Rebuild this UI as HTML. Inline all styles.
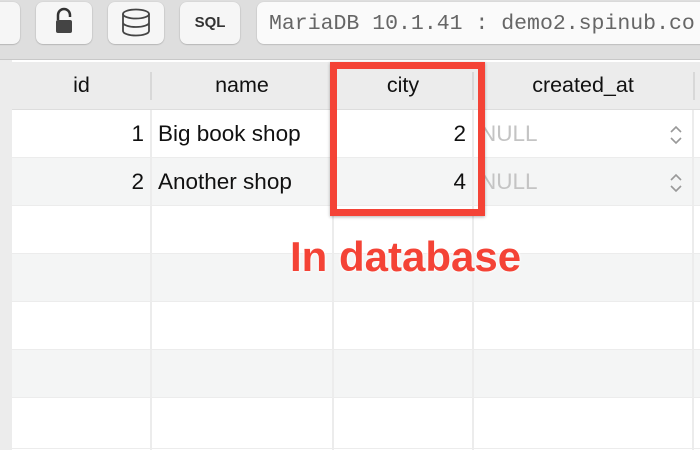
<!DOCTYPE html><html><head><style>
html,body{margin:0;width:700px;height:450px;overflow:hidden}
body{background:#fff;font-family:"Liberation Sans",sans-serif;position:relative}
.tb{position:absolute;left:0;top:0;width:700px;height:59px;background:#dedede;border-bottom:1px solid #c8c8c8}
.btn{position:absolute;top:2px;height:42px;background:#f6f6f6;border-radius:7px;box-shadow:0 0.5px 1.5px rgba(0,0,0,.3)}
.addr{position:absolute;left:257px;top:2px;width:460px;height:42px;background:#fafafa;border-radius:7px;box-shadow:0 0.5px 1.5px rgba(0,0,0,.25);font-family:"Liberation Mono",monospace;font-size:21.5px;color:#666;line-height:44px;padding-left:12px;box-sizing:border-box;white-space:nowrap}
.hdr{position:absolute;top:62px;left:12px;width:688px;height:47px;background:#ececec;border-bottom:1px solid #ddd}
.h{position:absolute;top:0;height:47px;line-height:47px;text-align:center;font-size:21.5px;color:#111}
.sep{position:absolute;top:10px;width:2px;height:28px;background:#d8d8d8}
.row{position:absolute;left:12px;width:688px;height:47px;border-bottom:1px solid #ececec}
.vl{position:absolute;top:110px;width:2px;height:340px;background:#ececec}
.c{position:absolute;font-size:22.5px;color:#111;line-height:48px}
</style></head><body>
<div class="tb">
<div class="btn" style="left:-10px;width:30px"></div>
<div class="btn" style="left:36px;width:56px"><svg width="56" height="42"><path d="M22 18v-5a6 6 0 0 1 12 0v2" fill="none" stroke="#333" stroke-width="2.5"/><rect x="20" y="18" width="16" height="13" rx="2" fill="#444"/></svg></div>
<div class="btn" style="left:108px;width:56px"><svg width="56" height="42"><g fill="none" stroke="#444" stroke-width="1.8"><ellipse cx="28" cy="12" rx="13" ry="4.5"/><path d="M15 12v17c0 2.5 5.8 4.5 13 4.5s13-2 13-4.5V12M15 20.5c0 2.5 5.8 4.5 13 4.5s13-2 13-4.5"/></g></svg></div>
<div class="btn" style="left:180px;width:60px;text-align:center;line-height:42px;font-weight:bold;font-size:15px;color:#333">SQL</div>
<div class="addr">MariaDB 10.1.41 : demo2.spinub.co</div>
</div>
<div style="position:absolute;left:0;top:60px;width:12px;height:390px;background:#ececec"></div>
<div class="hdr">
<div class="h" style="left:0;width:139px">id</div><div class="sep" style="left:138px"></div>
<div class="h" style="left:139px;width:182px">name</div><div class="sep" style="left:320px"></div>
<div class="h" style="left:321px;width:140px">city</div><div class="sep" style="left:460px"></div>
<div class="h" style="left:461px;width:220px">created_at</div><div class="sep" style="left:681px"></div>
</div>
<div class="row" style="top:110px;background:#fff"></div>
<div class="row" style="top:158px;background:#f4f5f5"></div>
<div class="row" style="top:206px;background:#fff"></div>
<div class="row" style="top:254px;background:#f4f5f5"></div>
<div class="row" style="top:302px;background:#fff"></div>
<div class="row" style="top:350px;background:#f4f5f5"></div>
<div class="row" style="top:398px;background:#fff;height:50px"></div>
<div class="vl" style="left:150px"></div><div class="vl" style="left:332px"></div><div class="vl" style="left:472px"></div><div class="vl" style="left:692px"></div>
<div class="c" style="top:110px;left:12px;width:132px;text-align:right">1</div>
<div class="c" style="top:158px;left:12px;width:132px;text-align:right">2</div>
<div class="c" style="top:110px;left:158px">Big book shop</div>
<div class="c" style="top:158px;left:158px">Another shop</div>
<div class="c" style="top:110px;left:333px;width:133px;text-align:right">2</div>
<div class="c" style="top:158px;left:333px;width:133px;text-align:right">4</div>
<div class="c" style="top:110px;left:480px;color:#c4c4c4">NULL</div>
<div class="c" style="top:158px;left:480px;color:#c4c4c4">NULL</div>
<svg style="position:absolute;left:668px;top:124px" width="16" height="22"><path d="M3 8l5-5 5 5M3 14l5 5 5-5" fill="none" stroke="#999" stroke-width="1.6"/></svg>
<svg style="position:absolute;left:668px;top:172px" width="16" height="22"><path d="M3 8l5-5 5 5M3 14l5 5 5-5" fill="none" stroke="#999" stroke-width="1.6"/></svg>
<div style="position:absolute;left:330px;top:62px;width:141px;height:140px;border:7px solid #f44336;box-shadow:0 1px 3px rgba(0,0,0,.3)"></div>
<div style="position:absolute;left:290px;top:233px;font-size:42px;font-weight:bold;color:#f44336;text-shadow:0 0 3px #fff,0 0 3px #fff">In database</div>
</body></html>
